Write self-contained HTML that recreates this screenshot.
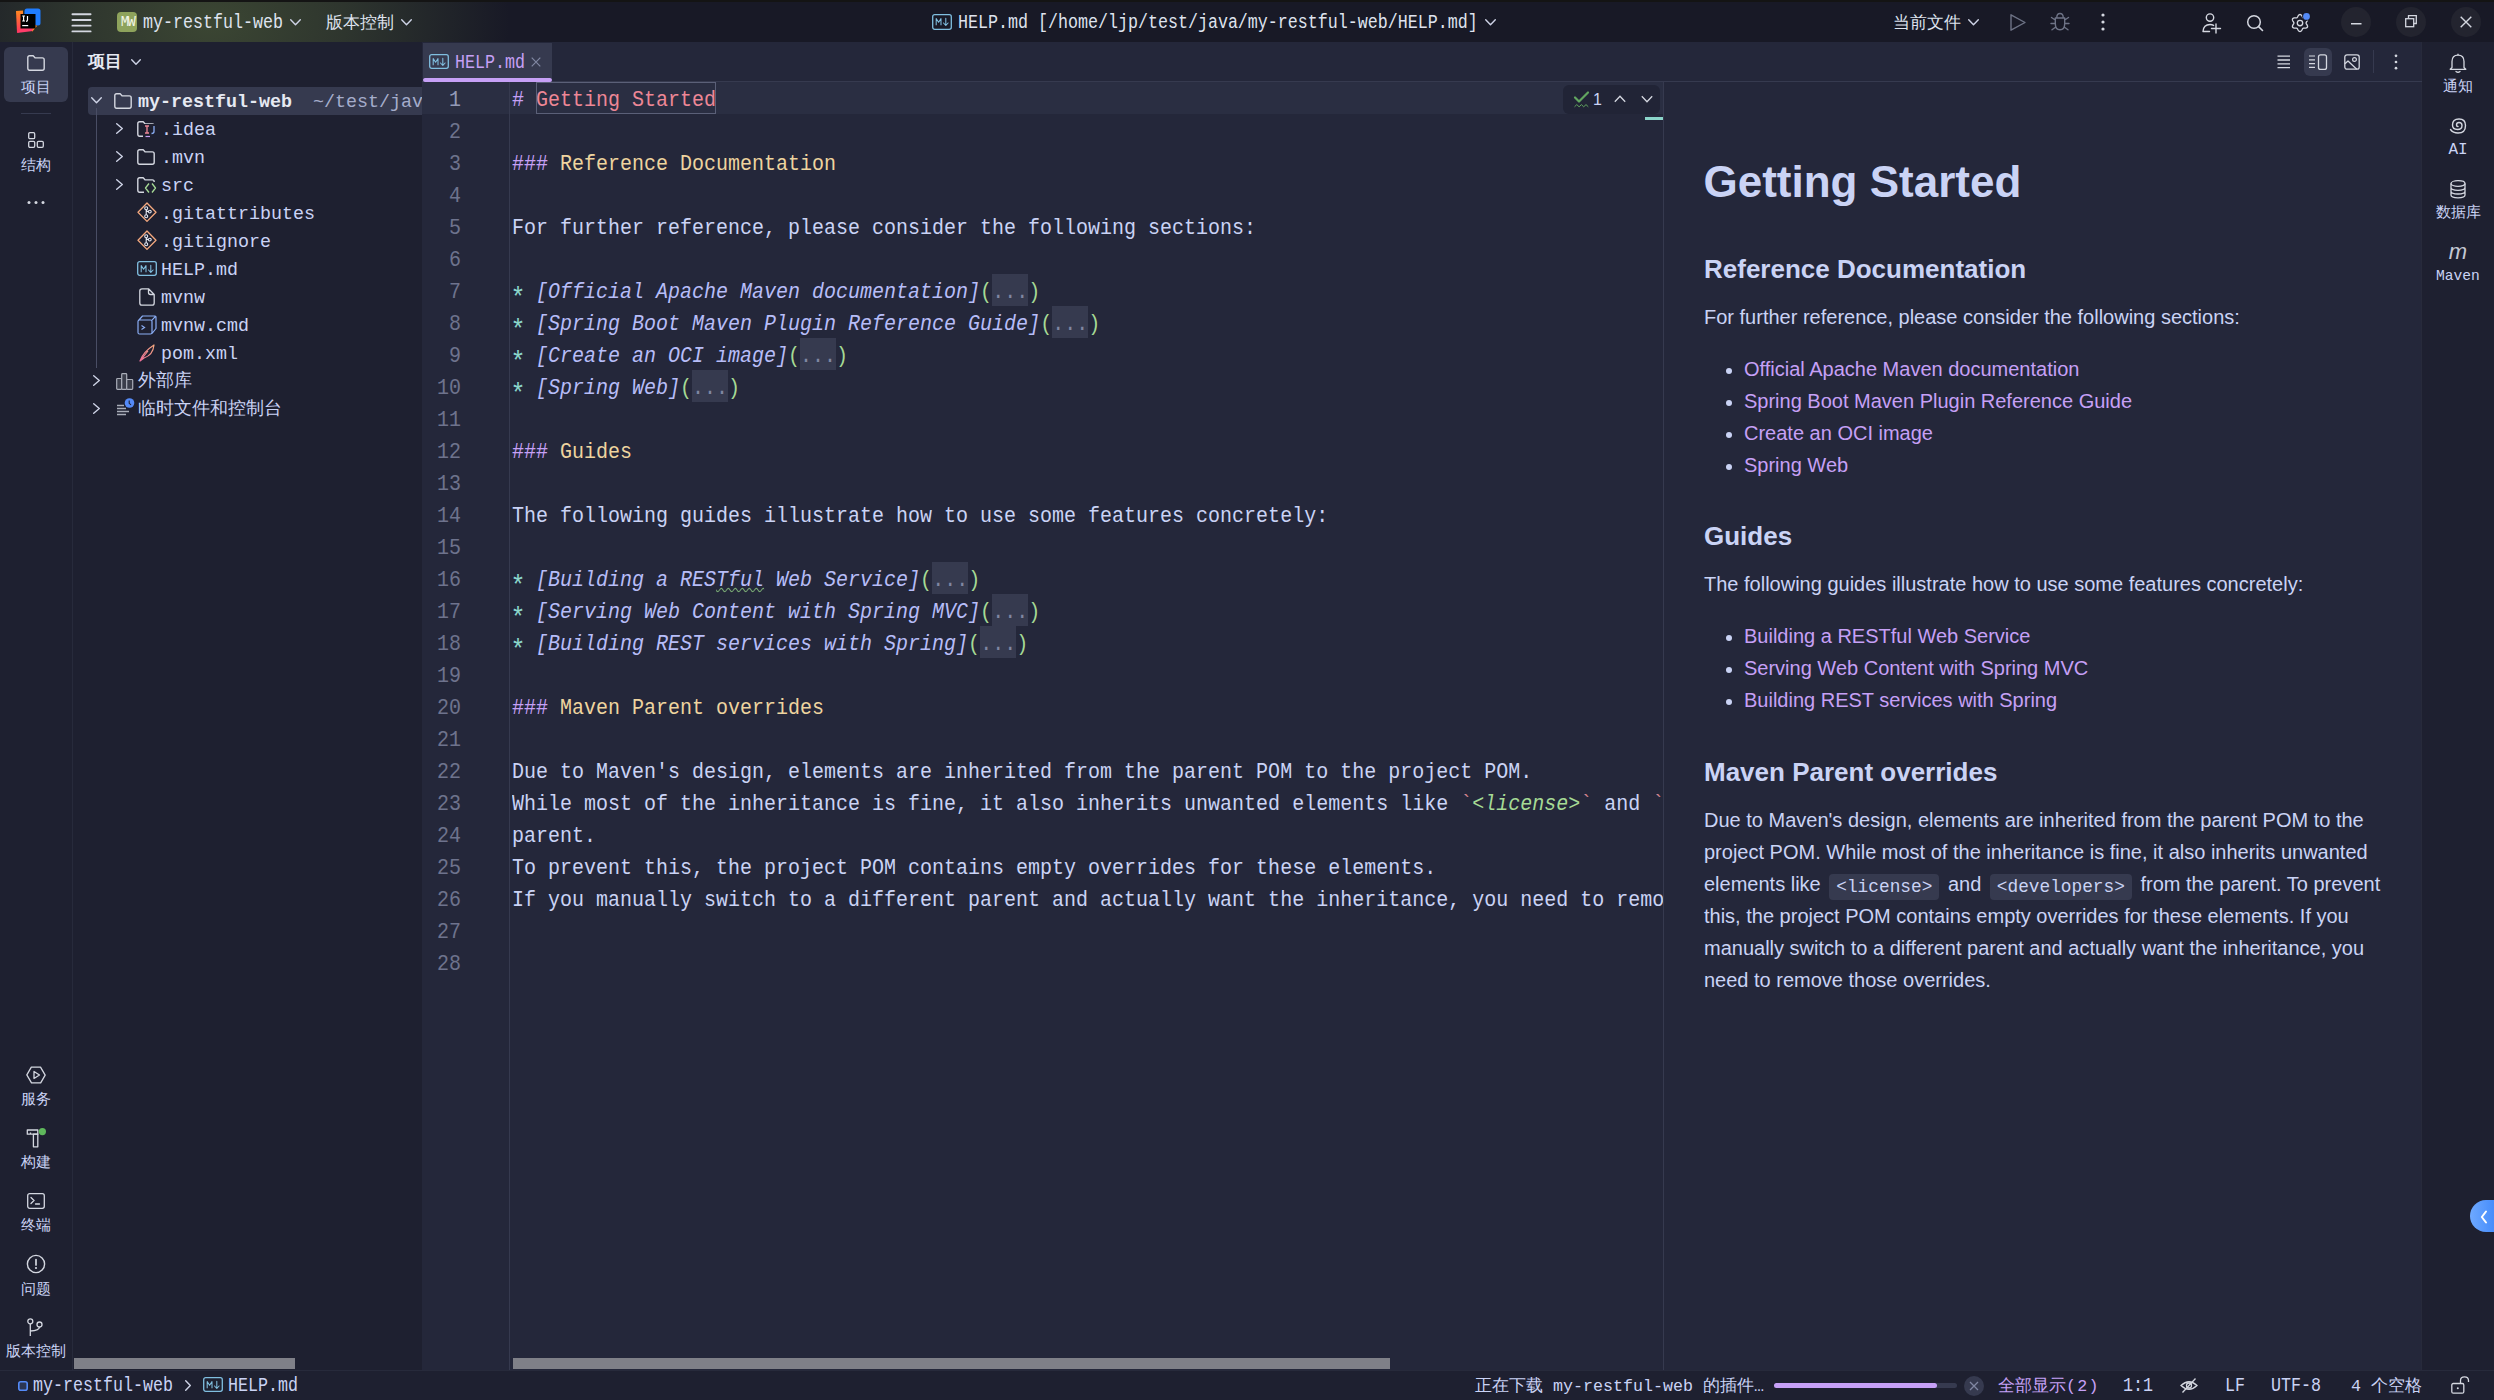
<!DOCTYPE html><html><head><meta charset="utf-8"><style>
*{box-sizing:border-box;margin:0;padding:0}
html,body{width:2494px;height:1400px;overflow:hidden;background:#1e2030;font-family:'Liberation Mono', monospace;color:#cad3f5}
.a{position:absolute;white-space:pre}
svg.a{overflow:visible}
.ed{font-family:'Liberation Mono', monospace;font-size:20px;line-height:32px;height:32px;transform:scaleY(1.14);transform-origin:0 8px}
.ln{font-family:'Liberation Mono', monospace;font-size:20px;line-height:32px;color:#6e738d;text-align:right;width:60px;left:401px;transform:scaleY(1.1);transform-origin:0 8px}
.tr{font-family:'Liberation Mono', monospace;font-size:18.33px;line-height:28px;height:28px;color:#cad3f5}
.pv{font-family:'Liberation Sans', sans-serif;font-size:20px;color:#cad3f5}
.lbl{font-family:'Liberation Mono', monospace;font-size:15px;line-height:18px;color:#cad3f5;text-align:center;width:72px;left:0}
</style></head><body>
<div class="a" style="left:0px;top:0px;width:2494px;height:42px;background:#181926;"></div>
<div class="a" style="left:0px;top:0px;width:2494px;height:2px;background:#141414;"></div>
<div class="a" style="left:0;top:2px;width:700px;height:40px;background:radial-gradient(ellipse 300px 190px at 210px 20px, rgba(112,138,70,0.40) 0%, rgba(112,138,70,0.25) 45%, rgba(112,138,70,0) 100%)"></div>
<div class="a" style="left:0px;top:42px;width:72px;height:1328px;background:#1e2030;"></div>
<div class="a" style="left:72px;top:42px;width:1px;height:1328px;background:#272a3b;"></div>
<div class="a" style="left:73px;top:42px;width:349px;height:1328px;background:#1e2030;"></div>
<div class="a" style="left:422px;top:42px;width:1242px;height:1328px;background:#24273a;"></div>
<div class="a" style="left:1664px;top:42px;width:758px;height:1328px;background:#24273a;"></div>
<div class="a" style="left:2422px;top:42px;width:72px;height:1328px;background:#1e2030;"></div>
<div class="a" style="left:2421px;top:42px;width:1px;height:1328px;background:#272a3b;"></div>
<div class="a" style="left:0px;top:1370px;width:2494px;height:30px;background:#1e2030;"></div>
<div class="a" style="left:0px;top:1370px;width:2494px;height:1px;background:#272a3b;"></div>
<svg class="a" style="left:15px;top:8px;" width="26" height="26" viewBox="0 0 26 26" fill="none">
<defs><linearGradient id="lg1" x1="0" y1="0" x2="0" y2="1"><stop offset="0" stop-color="#ff8a1f"/><stop offset="1" stop-color="#ff3160"/></linearGradient></defs>
<path d="M1 3 L8 2.5 L8 22 L2 25 Z" fill="url(#lg1)"/>
<path d="M2 25 L18 23 L18 19 L8 19 Z" fill="#ff3d6a"/>
<rect x="9.5" y="0.5" width="16" height="17" rx="2.5" fill="#1f7cff"/>
<path d="M17 24 L22 18 L19 16 Z" fill="#ff8a1f"/>
<rect x="5.5" y="6" width="15" height="14.5" fill="#000"/>
<path d="M7.2 8 H10 M8.6 8 V13 M7.2 13 H10 M12.5 8 V12 Q12.5 13.3 11 13.3" stroke="#fff" stroke-width="1.2"/>
<rect x="7.2" y="17" width="6" height="1.2" fill="#fff"/>
</svg>
<svg class="a" style="left:71px;top:13px;" width="21" height="19" viewBox="0 0 21 19" fill="none"><rect x="0.5" y="0.3" width="20" height="1.9" rx="0.9" fill="#d4d7e0"/><rect x="0.5" y="6.0" width="20" height="1.9" rx="0.9" fill="#d4d7e0"/><rect x="0.5" y="11.700000000000001" width="20" height="1.9" rx="0.9" fill="#d4d7e0"/><rect x="0.5" y="17.400000000000002" width="20" height="1.9" rx="0.9" fill="#d4d7e0"/></svg>
<div class="a" style="left:117px;top:12px;width:20px;height:20px;border-radius:4px;background:#8ea35c"></div>
<div class="a " style="left:117px;top:12px;width:21px;height:20px;line-height:20px;text-align:center;font-size:14px;letter-spacing:-1.6px;color:#f2f5e6;font-family:'Liberation Mono', monospace">MW</div>
<div class="a " style="left:143px;top:11px;font-size:16.67px;line-height:24px;color:#dfe3ee;transform:scaleY(1.17);transform-origin:0 10.3px">my-restful-web</div>
<svg class="a" style="left:290px;top:19px;" width="11" height="6.5" viewBox="0 0 11 6.5" fill="none"><path d="M0.7 0.7 L5.5 5.8 L10.3 0.7" stroke="#ced3e6" stroke-width="1.4" stroke-linecap="round" stroke-linejoin="round"/></svg>
<div class="a " style="left:326px;top:11px;font-size:17px;line-height:24px;color:#dfe3ee;font-family:'Liberation Sans', sans-serif">版本控制</div>
<svg class="a" style="left:401px;top:19px;" width="11" height="6.5" viewBox="0 0 11 6.5" fill="none"><path d="M0.7 0.7 L5.5 5.8 L10.3 0.7" stroke="#ced3e6" stroke-width="1.4" stroke-linecap="round" stroke-linejoin="round"/></svg>
<svg class="a" style="left:932px;top:14px;" width="20" height="16" viewBox="0 0 20 16" fill="none"><rect x="0.7" y="0.7" width="18.6" height="14.6" rx="2" stroke="#80bfe0" stroke-width="1.3"/><path d="M4.2 11.3 V4.6 L6.6 8.2 L9 4.6 V11.3" stroke="#80bfe0" stroke-width="1.05" stroke-linejoin="round"/><path d="M13.8 4.2 V11.3 M11.5 9 L13.8 11.5 L16.1 9" stroke="#80bfe0" stroke-width="1.05" stroke-linecap="round" stroke-linejoin="round"/></svg>
<div class="a " style="left:958px;top:11px;font-size:16.67px;line-height:24px;color:#dfe3ee;transform:scaleY(1.17);transform-origin:0 10.3px">HELP.md [/home/ljp/test/java/my-restful-web/HELP.md]</div>
<svg class="a" style="left:1485px;top:19px;" width="11" height="6.5" viewBox="0 0 11 6.5" fill="none"><path d="M0.7 0.7 L5.5 5.8 L10.3 0.7" stroke="#ced3e6" stroke-width="1.4" stroke-linecap="round" stroke-linejoin="round"/></svg>
<div class="a " style="left:1893px;top:11px;font-size:17px;line-height:24px;color:#dfe3ee;font-family:'Liberation Sans', sans-serif">当前文件</div>
<svg class="a" style="left:1968px;top:19px;" width="11" height="6.5" viewBox="0 0 11 6.5" fill="none"><path d="M0.7 0.7 L5.5 5.8 L10.3 0.7" stroke="#ced3e6" stroke-width="1.4" stroke-linecap="round" stroke-linejoin="round"/></svg>
<svg class="a" style="left:2009px;top:13px;" width="18" height="19" viewBox="0 0 18 19" fill="none"><path d="M2 1.8 L16 9.5 L2 17.2 Z" stroke="#6e7386" stroke-width="1.4" stroke-linejoin="round"/></svg>
<svg class="a" style="left:2049px;top:12px;" width="22" height="20" viewBox="0 0 22 20" fill="none"><path d="M7.8 5.5 Q7.8 1.5 11 1.5 Q14.2 1.5 14.2 5.5 M6.3 6 H15.7 V11.5 Q15.7 17.8 11 17.8 Q6.3 17.8 6.3 11.5 Z M6.3 8 L2.5 5.5 M15.7 8 L19.5 5.5 M6.3 11.5 H2 M15.7 11.5 H20 M6.8 15 L3 17.8 M15.2 15 L19 17.8" stroke="#6e7386" stroke-width="1.4" stroke-linecap="round" stroke-linejoin="round"/></svg>
<svg class="a" style="left:2100px;top:12px;" width="6" height="20" viewBox="0 0 6 20" fill="none"><circle cx="3" cy="3" r="1.6" fill="#d4d7e0"/><circle cx="3" cy="10" r="1.6" fill="#d4d7e0"/><circle cx="3" cy="17" r="1.6" fill="#d4d7e0"/></svg>
<svg class="a" style="left:2201px;top:13px;" width="22" height="21" viewBox="0 0 22 21" fill="none"><circle cx="9" cy="4.6" r="3.7" stroke="#d4d7e0" stroke-width="1.4"/><path d="M2 18.5 Q2.5 11.5 9 11.5 Q11.2 11.5 12.6 12.4 M2 18.5 H8.5 M15 11 V20 M10.5 15.5 H19.5" stroke="#d4d7e0" stroke-width="1.4" stroke-linecap="round"/></svg>
<svg class="a" style="left:2246px;top:14px;" width="18" height="18" viewBox="0 0 18 18" fill="none"><circle cx="8" cy="8" r="6.3" stroke="#d4d7e0" stroke-width="1.5"/><path d="M12.6 12.6 L16.5 16.5" stroke="#d4d7e0" stroke-width="1.6" stroke-linecap="round"/></svg>
<svg class="a" style="left:2290px;top:13px;" width="22" height="22" viewBox="0 0 22 22" fill="none"><path d="M16.10 10.00 L16.18 10.40 L16.40 10.84 L16.71 11.33 L17.05 11.89 L17.35 12.49 L17.53 13.12 L17.54 13.72 L17.36 14.25 L16.99 14.67 L16.46 14.96 L15.83 15.12 L15.16 15.16 L14.51 15.14 L13.93 15.12 L13.44 15.15 L13.05 15.28 L12.74 15.55 L12.47 15.96 L12.20 16.48 L11.89 17.05 L11.51 17.61 L11.06 18.08 L10.55 18.39 L10.00 18.50 L9.45 18.39 L8.94 18.08 L8.49 17.61 L8.11 17.05 L7.80 16.48 L7.53 15.96 L7.26 15.55 L6.95 15.28 L6.56 15.15 L6.07 15.12 L5.49 15.14 L4.84 15.16 L4.17 15.12 L3.54 14.96 L3.01 14.67 L2.64 14.25 L2.46 13.72 L2.47 13.12 L2.65 12.49 L2.95 11.89 L3.29 11.33 L3.60 10.84 L3.82 10.40 L3.90 10.00 L3.82 9.60 L3.60 9.16 L3.29 8.67 L2.95 8.11 L2.65 7.51 L2.47 6.88 L2.46 6.28 L2.64 5.75 L3.01 5.33 L3.54 5.04 L4.17 4.88 L4.84 4.84 L5.49 4.86 L6.07 4.88 L6.56 4.85 L6.95 4.72 L7.26 4.45 L7.53 4.04 L7.80 3.52 L8.11 2.95 L8.49 2.39 L8.94 1.92 L9.45 1.61 L10.00 1.50 L10.55 1.61 L11.06 1.92 L11.51 2.39 L11.89 2.95 L12.20 3.52 L12.47 4.04 L12.74 4.45 L13.05 4.72 L13.44 4.85 L13.93 4.88 L14.51 4.86 L15.16 4.84 L15.83 4.88 L16.46 5.04 L16.99 5.33 L17.36 5.75 L17.54 6.28 L17.53 6.88 L17.35 7.51 L17.05 8.11 L16.71 8.67 L16.40 9.16 L16.18 9.60 Z" stroke="#d4d7e0" stroke-width="1.35" stroke-linejoin="round"/><circle cx="10" cy="10" r="2.7" stroke="#d4d7e0" stroke-width="1.35"/><circle cx="16.5" cy="3.4" r="4.3" fill="#181926"/><circle cx="16.5" cy="3.4" r="3.4" fill="#548af7"/></svg>
<div class="a" style="left:2341px;top:7px;width:30px;height:30px;border-radius:15px;background:#23242f"></div>
<div class="a" style="left:2396px;top:7px;width:30px;height:30px;border-radius:15px;background:#23242f"></div>
<div class="a" style="left:2451px;top:7px;width:30px;height:30px;border-radius:15px;background:#23242f"></div>
<svg class="a" style="left:2351px;top:23px;" width="11" height="2" viewBox="0 0 11 2" fill="none"><rect x="0" y="0" width="10.5" height="1.5" fill="#d4d7e0"/></svg>
<svg class="a" style="left:2405px;top:15px;" width="12" height="13" viewBox="0 0 12 13" fill="none"><rect x="0.7" y="3.7" width="8" height="8" stroke="#d4d7e0" stroke-width="1.3"/><path d="M3.5 3.5 V0.7 H11.3 V8.5 H8.8" stroke="#d4d7e0" stroke-width="1.3"/></svg>
<svg class="a" style="left:2460px;top:16px;" width="12" height="12" viewBox="0 0 12 12" fill="none"><path d="M0.7 0.7 L11.3 11.3 M11.3 0.7 L0.7 11.3" stroke="#d4d7e0" stroke-width="1.4"/></svg>
<div class="a" style="left:4px;top:47px;width:64px;height:55px;border-radius:6px;background:#363a4f"></div>
<svg class="a" style="left:27px;top:55px;" width="18" height="16" viewBox="0 0 18 16" fill="none"><path d="M0.8 2.6 Q0.8 0.8 2.6 0.8 H6.2 L8.2 2.9 H15.3 Q17.2 2.9 17.2 4.8 V13.3 Q17.2 15.2 15.3 15.2 H2.6 Q0.8 15.2 0.8 13.3 Z" stroke="#d4d7e0" stroke-width="1.4" stroke-linejoin="round"/></svg>
<div class="a lbl" style="top:78px;font-family:'Liberation Sans', sans-serif;font-size:15px;line-height:18px">项目</div>
<div class="a" style="left:21px;top:113px;width:30px;height:1px;background:#363a4f;"></div>
<svg class="a" style="left:28px;top:132px;" width="17" height="16" viewBox="0 0 17 16" fill="none"><rect x="0.7" y="0.7" width="6" height="6" rx="1.2" stroke="#d4d7e0" stroke-width="1.3"/><rect x="0.7" y="9.3" width="6" height="6" rx="1.2" stroke="#d4d7e0" stroke-width="1.3"/><rect x="9.3" y="9.3" width="6" height="6" rx="1.2" stroke="#d4d7e0" stroke-width="1.3"/></svg>
<div class="a lbl" style="top:156px;font-family:'Liberation Sans', sans-serif;font-size:15px;line-height:18px">结构</div>
<svg class="a" style="left:27px;top:200px;" width="18" height="5" viewBox="0 0 18 5" fill="none"><circle cx="2" cy="2.5" r="1.5" fill="#d4d7e0"/><circle cx="9" cy="2.5" r="1.5" fill="#d4d7e0"/><circle cx="16" cy="2.5" r="1.5" fill="#d4d7e0"/></svg>
<svg class="a" style="left:26px;top:1065px;" width="20" height="20" viewBox="0 0 20 20" fill="none"><path d="M10 1 L18 5.5 V14.5 L10 19 L2 14.5 V5.5 Z" stroke="#d4d7e0" stroke-width="1.3" stroke-linejoin="round" transform="rotate(30 10 10)"/><path d="M8 6.5 L13.5 10 L8 13.5 Z" stroke="#d4d7e0" stroke-width="1.3" stroke-linejoin="round"/></svg>
<div class="a lbl" style="top:1090px;font-family:'Liberation Sans', sans-serif;font-size:15px;line-height:18px">服务</div>
<svg class="a" style="left:26px;top:1127px;" width="22" height="22" viewBox="0 0 22 22" fill="none"><path d="M1.3 3 H11.8 V7.2 H1.3 Z M4.5 7.2 V5.6" stroke="#d4d7e0" stroke-width="1.3" stroke-linejoin="round"/><path d="M7.4 7.2 H11.8 V19.8 H7.4 Z" stroke="#d4d7e0" stroke-width="1.3" stroke-linejoin="round"/><circle cx="16.4" cy="4.6" r="3.6" fill="#5fb85c"/></svg>
<div class="a lbl" style="top:1153px;font-family:'Liberation Sans', sans-serif;font-size:15px;line-height:18px">构建</div>
<svg class="a" style="left:27px;top:1193px;" width="18" height="16" viewBox="0 0 18 16" fill="none"><rect x="0.7" y="0.7" width="16.6" height="14.6" rx="2" stroke="#d4d7e0" stroke-width="1.3"/><path d="M4 4.5 L7 7.5 L4 10.5 M8.5 11 H12.5" stroke="#d4d7e0" stroke-width="1.3" stroke-linecap="round"/></svg>
<div class="a lbl" style="top:1216px;font-family:'Liberation Sans', sans-serif;font-size:15px;line-height:18px">终端</div>
<svg class="a" style="left:26px;top:1254px;" width="20" height="20" viewBox="0 0 20 20" fill="none"><circle cx="10" cy="10" r="8.6" stroke="#d4d7e0" stroke-width="1.4"/><path d="M10 5.5 V11" stroke="#d4d7e0" stroke-width="1.7" stroke-linecap="round"/><circle cx="10" cy="14" r="1.1" fill="#d4d7e0"/></svg>
<div class="a lbl" style="top:1280px;font-family:'Liberation Sans', sans-serif;font-size:15px;line-height:18px">问题</div>
<svg class="a" style="left:27px;top:1318px;" width="16" height="19" viewBox="0 0 16 19" fill="none"><circle cx="3.3" cy="3.3" r="2.5" stroke="#d4d7e0" stroke-width="1.3"/><circle cx="12.5" cy="6.5" r="2.5" stroke="#d4d7e0" stroke-width="1.3"/><path d="M3.3 5.8 V18 M12.5 9 Q12.5 12.5 3.3 13" stroke="#d4d7e0" stroke-width="1.3"/></svg>
<div class="a lbl" style="top:1342px;font-family:'Liberation Sans', sans-serif;font-size:15px;line-height:18px">版本控制</div>
<div class="a " style="left:88px;top:50px;font-size:17px;line-height:24px;color:#e6e9f2;font-weight:bold;font-family:'Liberation Sans', sans-serif">项目</div>
<svg class="a" style="left:131px;top:59px;" width="10" height="6" viewBox="0 0 10 6" fill="none"><path d="M0.7 0.7 L5.0 5.3 L9.3 0.7" stroke="#ced3e6" stroke-width="1.4" stroke-linecap="round" stroke-linejoin="round"/></svg>
<div class="a" style="left:88px;top:87px;width:334px;height:28px;border-radius:4px 0 0 4px;background:#363a4f"></div>
<div class="a" style="left:96px;top:108px;width:1px;height:260px;background:#494d64;"></div>
<svg class="a" style="left:91px;top:97px;" width="11" height="6.5" viewBox="0 0 11 6.5" fill="none"><path d="M0.7 0.7 L5.5 5.8 L10.3 0.7" stroke="#ced3e6" stroke-width="1.4" stroke-linecap="round" stroke-linejoin="round"/></svg>
<svg class="a" style="left:114px;top:93px;" width="18" height="16" viewBox="0 0 18 16" fill="none"><path d="M0.8 2.6 Q0.8 0.8 2.6 0.8 H6.2 L8.2 2.9 H15.3 Q17.2 2.9 17.2 4.8 V13.3 Q17.2 15.2 15.3 15.2 H2.6 Q0.8 15.2 0.8 13.3 Z" stroke="#d4d7e0" stroke-width="1.4" stroke-linejoin="round"/></svg>
<div class="a tr" style="left:138px;top:89px;font-weight:bold;color:#e6e9f2">my-restful-web</div>
<div class="a tr" style="left:313px;top:89px;width:109px;overflow:hidden;color:#a5adcb">~/test/java/my-restful-web</div>
<svg class="a" style="left:116px;top:123px;" width="7" height="11" viewBox="0 0 7 11" fill="none"><path d="M0.7 0.7 L6.3 5.5 L0.7 10.3" stroke="#ced3e6" stroke-width="1.4" stroke-linecap="round" stroke-linejoin="round"/></svg>
<svg class="a" style="left:137px;top:121px;" width="18" height="16" viewBox="0 0 18 16" fill="none"><path d="M0.8 2.6 Q0.8 0.8 2.6 0.8 H6.2 L8.2 2.9 H15.3 Q17.2 2.9 17.2 4.8 V13.3 Q17.2 15.2 15.3 15.2 H2.6 Q0.8 15.2 0.8 13.3 Z" stroke="#d4d7e0" stroke-width="1.4" stroke-linejoin="round"/></svg>
<div class="a" style="left:143px;top:124px;width:13px;height:14px;background:#1e2030"></div>
<svg class="a" style="left:144px;top:125px;" width="13" height="14" viewBox="0 0 13 14" fill="none"><path d="M1 1 H5 M3 1 V8 M1 8 H5" stroke="#ed8796" stroke-width="1.3"/><path d="M10 1 V6.5 Q10 8.5 7.5 8.5" stroke="#8aadf4" stroke-width="1.3"/><path d="M1.5 11.5 H6" stroke="#c6a0f6" stroke-width="1.2"/></svg>
<div class="a tr" style="left:161px;top:117px;">.idea</div>
<svg class="a" style="left:116px;top:151px;" width="7" height="11" viewBox="0 0 7 11" fill="none"><path d="M0.7 0.7 L6.3 5.5 L0.7 10.3" stroke="#ced3e6" stroke-width="1.4" stroke-linecap="round" stroke-linejoin="round"/></svg>
<svg class="a" style="left:137px;top:149px;" width="18" height="16" viewBox="0 0 18 16" fill="none"><path d="M0.8 2.6 Q0.8 0.8 2.6 0.8 H6.2 L8.2 2.9 H15.3 Q17.2 2.9 17.2 4.8 V13.3 Q17.2 15.2 15.3 15.2 H2.6 Q0.8 15.2 0.8 13.3 Z" stroke="#d4d7e0" stroke-width="1.4" stroke-linejoin="round"/></svg>
<div class="a tr" style="left:161px;top:145px;">.mvn</div>
<svg class="a" style="left:116px;top:179px;" width="7" height="11" viewBox="0 0 7 11" fill="none"><path d="M0.7 0.7 L6.3 5.5 L0.7 10.3" stroke="#ced3e6" stroke-width="1.4" stroke-linecap="round" stroke-linejoin="round"/></svg>
<svg class="a" style="left:137px;top:177px;" width="18" height="16" viewBox="0 0 18 16" fill="none"><path d="M0.8 2.6 Q0.8 0.8 2.6 0.8 H6.2 L8.2 2.9 H15.3 Q17.2 2.9 17.2 4.8 V13.3 Q17.2 15.2 15.3 15.2 H2.6 Q0.8 15.2 0.8 13.3 Z" stroke="#d4d7e0" stroke-width="1.4" stroke-linejoin="round"/></svg>
<div class="a" style="left:144px;top:182px;width:13px;height:12px;background:#1e2030"></div>
<svg class="a" style="left:144px;top:182px;" width="13" height="12" viewBox="0 0 13 12" fill="none"><path d="M5 1.5 L1.5 6 L5 10.5 M8 1.5 L11.5 6 L8 10.5" stroke="#a6da95" stroke-width="1.3" stroke-linejoin="round"/></svg>
<div class="a tr" style="left:161px;top:173px;">src</div>
<svg class="a" style="left:137px;top:202px;" width="20" height="21" viewBox="0 0 20 21" fill="none"><path d="M10 1 L19 10.2 L10 19.4 L1 10.2 Z" stroke="#f5a97f" stroke-width="1.3" stroke-linejoin="round"/><circle cx="9.2" cy="6.3" r="1.5" stroke="#e6e9f2" stroke-width="1.1"/><circle cx="9.2" cy="14.2" r="1.5" stroke="#e6e9f2" stroke-width="1.1"/><circle cx="12.8" cy="9.6" r="1.4" stroke="#e6e9f2" stroke-width="1.1"/><path d="M9.2 7.8 V12.7 M9.2 7.8 Q9.5 9.6 11.4 9.6" stroke="#e6e9f2" stroke-width="1.1"/></svg>
<div class="a tr" style="left:161px;top:201px;">.gitattributes</div>
<svg class="a" style="left:137px;top:230px;" width="20" height="21" viewBox="0 0 20 21" fill="none"><path d="M10 1 L19 10.2 L10 19.4 L1 10.2 Z" stroke="#f5a97f" stroke-width="1.3" stroke-linejoin="round"/><circle cx="9.2" cy="6.3" r="1.5" stroke="#e6e9f2" stroke-width="1.1"/><circle cx="9.2" cy="14.2" r="1.5" stroke="#e6e9f2" stroke-width="1.1"/><circle cx="12.8" cy="9.6" r="1.4" stroke="#e6e9f2" stroke-width="1.1"/><path d="M9.2 7.8 V12.7 M9.2 7.8 Q9.5 9.6 11.4 9.6" stroke="#e6e9f2" stroke-width="1.1"/></svg>
<div class="a tr" style="left:161px;top:229px;">.gitignore</div>
<svg class="a" style="left:137px;top:261px;" width="20" height="15" viewBox="0 0 20 15" fill="none"><rect x="0.7" y="0.7" width="18.6" height="13.6" rx="2" stroke="#80bfe0" stroke-width="1.3"/><path d="M4.2 11.3 V4.6 L6.6 8.2 L9 4.6 V11.3" stroke="#80bfe0" stroke-width="1.05" stroke-linejoin="round"/><path d="M13.8 4.2 V11.3 M11.5 9 L13.8 11.5 L16.1 9" stroke="#80bfe0" stroke-width="1.05" stroke-linecap="round" stroke-linejoin="round"/></svg>
<div class="a tr" style="left:161px;top:257px;">HELP.md</div>
<svg class="a" style="left:139px;top:288px;" width="16" height="18" viewBox="0 0 16 18" fill="none"><path d="M3 0.8 H9.5 L15.2 6.5 V15 Q15.2 17.2 13 17.2 H3 Q0.8 17.2 0.8 15 V3 Q0.8 0.8 3 0.8 Z M9.5 0.8 V4.5 Q9.5 6.5 11.5 6.5 H15.2" stroke="#d4d7e0" stroke-width="1.3" stroke-linejoin="round"/></svg>
<div class="a tr" style="left:161px;top:285px;">mvnw</div>
<svg class="a" style="left:137px;top:315px;" width="20" height="20" viewBox="0 0 20 20" fill="none"><path d="M1 6.5 Q1 5 2.5 5 H13.5 Q15 5 15 6.5 V17.5 Q15 19 13.5 19 H2.5 Q1 19 1 17.5 Z M1.5 5.5 L5.5 1 H18 Q19 1 19 2 V13.5 L15 18.5 M15 5.2 L18.5 1.3" stroke="#8aadf4" stroke-width="1.2" stroke-linejoin="round"/><path d="M4.5 10.5 L7.5 12.5 L4.5 14.5" stroke="#8aadf4" stroke-width="1.2"/></svg>
<div class="a tr" style="left:161px;top:313px;">mvnw.cmd</div>
<svg class="a" style="left:139px;top:344px;" width="16" height="18" viewBox="0 0 16 18" fill="none"><defs><linearGradient id="pg" x1="1" y1="0" x2="0" y2="1"><stop offset="0" stop-color="#f5a97f"/><stop offset="1" stop-color="#ee6f9a"/></linearGradient></defs><path d="M1 17 Q4 8 15 1 Q14 11 5 14 Z M1 17 L9 7" stroke="url(#pg)" stroke-width="1.2" stroke-linejoin="round"/></svg>
<div class="a tr" style="left:161px;top:341px;">pom.xml</div>
<svg class="a" style="left:93px;top:375px;" width="7" height="11" viewBox="0 0 7 11" fill="none"><path d="M0.7 0.7 L6.3 5.5 L0.7 10.3" stroke="#ced3e6" stroke-width="1.4" stroke-linecap="round" stroke-linejoin="round"/></svg>
<svg class="a" style="left:116px;top:373px;" width="18" height="17" viewBox="0 0 18 17" fill="none"><rect x="0.7" y="5.5" width="5" height="10.8" rx="0.8" fill="#3a3d4a" stroke="#a9adb8" stroke-width="1.2"/><rect x="5.7" y="0.7" width="5" height="15.6" rx="0.8" fill="#3a3d4a" stroke="#a9adb8" stroke-width="1.2"/><rect x="10.7" y="6.5" width="6" height="9.8" rx="0.8" fill="#3a3d4a" stroke="#a9adb8" stroke-width="1.2"/></svg>
<div class="a " style="left:138px;top:366px;font-size:18px;line-height:28px;color:#cad3f5;font-family:'Liberation Sans', sans-serif">外部库</div>
<svg class="a" style="left:93px;top:403px;" width="7" height="11" viewBox="0 0 7 11" fill="none"><path d="M0.7 0.7 L6.3 5.5 L0.7 10.3" stroke="#ced3e6" stroke-width="1.4" stroke-linecap="round" stroke-linejoin="round"/></svg>
<svg class="a" style="left:116px;top:398px;" width="19" height="18" viewBox="0 0 19 18" fill="none"><path d="M1 7.5 H8 M1 10.5 H10 M1 13.5 H13 M1 16.5 H10" stroke="#a9adb8" stroke-width="1.3"/><circle cx="13.5" cy="5" r="4.8" fill="#548af7"/><path d="M13.2 2.5 V5.3 L15 6.8" stroke="#1e2030" stroke-width="1.1"/></svg>
<div class="a " style="left:138px;top:394px;font-size:18px;line-height:28px;color:#cad3f5;font-family:'Liberation Sans', sans-serif">临时文件和控制台</div>
<div class="a" style="left:74px;top:1358px;width:221px;height:11px;background:#7f8088;"></div>
<div class="a" style="left:422px;top:81px;width:2000px;height:1px;background:#363a4f;"></div>
<div class="a" style="left:423px;top:43px;width:129px;height:35px;background:#363a4f;"></div>
<div class="a" style="left:423px;top:78px;width:129px;height:4px;border-radius:2px;background:#c6a0f6"></div>
<svg class="a" style="left:429px;top:54px;" width="20" height="15" viewBox="0 0 20 15" fill="none"><rect x="0.7" y="0.7" width="18.6" height="13.6" rx="2" stroke="#80bfe0" stroke-width="1.3"/><path d="M4.2 11.3 V4.6 L6.6 8.2 L9 4.6 V11.3" stroke="#80bfe0" stroke-width="1.05" stroke-linejoin="round"/><path d="M13.8 4.2 V11.3 M11.5 9 L13.8 11.5 L16.1 9" stroke="#80bfe0" stroke-width="1.05" stroke-linecap="round" stroke-linejoin="round"/></svg>
<div class="a " style="left:455px;top:51px;font-size:16.67px;line-height:24px;color:#c6a0f6;transform:scaleY(1.18);transform-origin:0 11px">HELP.md</div>
<svg class="a" style="left:531px;top:57px;" width="10" height="10" viewBox="0 0 10 10" fill="none"><path d="M0.7 0.7 L9.3 9.3 M9.3 0.7 L0.7 9.3" stroke="#8087a2" stroke-width="1.2"/></svg>
<svg class="a" style="left:2277px;top:55px;" width="14" height="14" viewBox="0 0 14 14" fill="none"><path d="M0.5 1.2 H13 M0.5 5 H13 M0.5 8.8 H13 M0.5 12.6 H13" stroke="#d4d7e0" stroke-width="1.3"/></svg>
<div class="a" style="left:2304px;top:48px;width:28px;height:28px;border-radius:6px;background:#363a4f"></div>
<svg class="a" style="left:2308px;top:54px;" width="20" height="16" viewBox="0 0 20 16" fill="none"><path d="M1 2 H7 M1 5.8 H7 M1 9.6 H7 M1 13.4 H7" stroke="#d4d7e0" stroke-width="1.2"/><rect x="10.5" y="0.8" width="8" height="14.6" rx="2" stroke="#d4d7e0" stroke-width="1.3"/></svg>
<svg class="a" style="left:2344px;top:54px;" width="16" height="16" viewBox="0 0 16 16" fill="none"><rect x="0.8" y="0.8" width="14.4" height="14.4" rx="2.2" stroke="#d4d7e0" stroke-width="1.3"/><path d="M0.9 9.8 L4 7 L12.8 15.2" stroke="#d4d7e0" stroke-width="1.3" stroke-linejoin="round"/><circle cx="10.5" cy="5.5" r="1.9" stroke="#d4d7e0" stroke-width="1.2"/></svg>
<div class="a" style="left:2373px;top:50px;width:1px;height:23px;background:#363a4f;"></div>
<svg class="a" style="left:2393px;top:53px;" width="6" height="19" viewBox="0 0 6 19" fill="none"><circle cx="3" cy="2.8" r="1.35" fill="#d4d7e0"/><circle cx="3" cy="9" r="1.35" fill="#d4d7e0"/><circle cx="3" cy="15.2" r="1.35" fill="#d4d7e0"/></svg>
<div class="a" style="left:422px;top:82px;width:1242px;height:32px;background:#2a2e42;"></div>
<div class="a" style="left:509px;top:82px;width:1px;height:1288px;background:#363a4f;"></div>
<div class="a" style="left:1663px;top:82px;width:1px;height:1288px;background:#363a4f;"></div>
<div class="a ln" style="top:84px;color:#939ab7">1</div>
<div class="a ed" style="left:512px;top:83px;width:1151px;overflow:hidden"><span style="color:#c6a0f6;"># </span><span style="color:#ed8796;">Getting Started</span></div>
<div class="a ln" style="top:116px;color:#6e738d">2</div>
<div class="a ln" style="top:148px;color:#6e738d">3</div>
<div class="a ed" style="left:512px;top:147px;width:1151px;overflow:hidden"><span style="color:#c6a0f6;">### </span><span style="color:#eed49f;">Reference Documentation</span></div>
<div class="a ln" style="top:180px;color:#6e738d">4</div>
<div class="a ln" style="top:212px;color:#6e738d">5</div>
<div class="a ed" style="left:512px;top:211px;width:1151px;overflow:hidden"><span style="color:#cad3f5;">For further reference, please consider the following sections:</span></div>
<div class="a ln" style="top:244px;color:#6e738d">6</div>
<div class="a ln" style="top:276px;color:#6e738d">7</div>
<div class="a" style="left:992px;top:274px;width:36px;height:31.5px;background:#363a4f;"></div>
<div class="a ed" style="left:512px;top:275px;width:1151px;overflow:hidden"><span style="color:#8bd5ca;display:inline-block;transform:translateY(4px) scale(1.25);transform-origin:50% 30%">*</span> <span style="color:#b7bdf8;font-style:italic">[Official Apache Maven documentation]</span><span style="color:#a6da95;">(</span><span style="color:#8087a2">...</span><span style="color:#a6da95;">)</span></div>
<div class="a ln" style="top:308px;color:#6e738d">8</div>
<div class="a" style="left:1052px;top:306px;width:36px;height:31.5px;background:#363a4f;"></div>
<div class="a ed" style="left:512px;top:307px;width:1151px;overflow:hidden"><span style="color:#8bd5ca;display:inline-block;transform:translateY(4px) scale(1.25);transform-origin:50% 30%">*</span> <span style="color:#b7bdf8;font-style:italic">[Spring Boot Maven Plugin Reference Guide]</span><span style="color:#a6da95;">(</span><span style="color:#8087a2">...</span><span style="color:#a6da95;">)</span></div>
<div class="a ln" style="top:340px;color:#6e738d">9</div>
<div class="a" style="left:800px;top:338px;width:36px;height:31.5px;background:#363a4f;"></div>
<div class="a ed" style="left:512px;top:339px;width:1151px;overflow:hidden"><span style="color:#8bd5ca;display:inline-block;transform:translateY(4px) scale(1.25);transform-origin:50% 30%">*</span> <span style="color:#b7bdf8;font-style:italic">[Create an OCI image]</span><span style="color:#a6da95;">(</span><span style="color:#8087a2">...</span><span style="color:#a6da95;">)</span></div>
<div class="a ln" style="top:372px;color:#6e738d">10</div>
<div class="a" style="left:692px;top:370px;width:36px;height:31.5px;background:#363a4f;"></div>
<div class="a ed" style="left:512px;top:371px;width:1151px;overflow:hidden"><span style="color:#8bd5ca;display:inline-block;transform:translateY(4px) scale(1.25);transform-origin:50% 30%">*</span> <span style="color:#b7bdf8;font-style:italic">[Spring Web]</span><span style="color:#a6da95;">(</span><span style="color:#8087a2">...</span><span style="color:#a6da95;">)</span></div>
<div class="a ln" style="top:404px;color:#6e738d">11</div>
<div class="a ln" style="top:436px;color:#6e738d">12</div>
<div class="a ed" style="left:512px;top:435px;width:1151px;overflow:hidden"><span style="color:#c6a0f6;">### </span><span style="color:#eed49f;">Guides</span></div>
<div class="a ln" style="top:468px;color:#6e738d">13</div>
<div class="a ln" style="top:500px;color:#6e738d">14</div>
<div class="a ed" style="left:512px;top:499px;width:1151px;overflow:hidden"><span style="color:#cad3f5;">The following guides illustrate how to use some features concretely:</span></div>
<div class="a ln" style="top:532px;color:#6e738d">15</div>
<div class="a ln" style="top:564px;color:#6e738d">16</div>
<div class="a" style="left:932px;top:562px;width:36px;height:31.5px;background:#363a4f;"></div>
<div class="a ed" style="left:512px;top:563px;width:1151px;overflow:hidden"><span style="color:#8bd5ca;display:inline-block;transform:translateY(4px) scale(1.25);transform-origin:50% 30%">*</span> <span style="color:#b7bdf8;font-style:italic">[Building a RES</span><span style="color:#b7bdf8;font-style:italic;text-decoration:underline wavy #78a873;text-decoration-thickness:1px;text-underline-offset:1px">Tful</span><span style="color:#b7bdf8;font-style:italic"> Web Service]</span><span style="color:#a6da95;">(</span><span style="color:#8087a2">...</span><span style="color:#a6da95;">)</span></div>
<div class="a ln" style="top:596px;color:#6e738d">17</div>
<div class="a" style="left:992px;top:594px;width:36px;height:31.5px;background:#363a4f;"></div>
<div class="a ed" style="left:512px;top:595px;width:1151px;overflow:hidden"><span style="color:#8bd5ca;display:inline-block;transform:translateY(4px) scale(1.25);transform-origin:50% 30%">*</span> <span style="color:#b7bdf8;font-style:italic">[Serving Web Content with Spring MVC]</span><span style="color:#a6da95;">(</span><span style="color:#8087a2">...</span><span style="color:#a6da95;">)</span></div>
<div class="a ln" style="top:628px;color:#6e738d">18</div>
<div class="a" style="left:980px;top:626px;width:36px;height:31.5px;background:#363a4f;"></div>
<div class="a ed" style="left:512px;top:627px;width:1151px;overflow:hidden"><span style="color:#8bd5ca;display:inline-block;transform:translateY(4px) scale(1.25);transform-origin:50% 30%">*</span> <span style="color:#b7bdf8;font-style:italic">[Building REST services with Spring]</span><span style="color:#a6da95;">(</span><span style="color:#8087a2">...</span><span style="color:#a6da95;">)</span></div>
<div class="a ln" style="top:660px;color:#6e738d">19</div>
<div class="a ln" style="top:692px;color:#6e738d">20</div>
<div class="a ed" style="left:512px;top:691px;width:1151px;overflow:hidden"><span style="color:#c6a0f6;">### </span><span style="color:#eed49f;">Maven Parent overrides</span></div>
<div class="a ln" style="top:724px;color:#6e738d">21</div>
<div class="a ln" style="top:756px;color:#6e738d">22</div>
<div class="a ed" style="left:512px;top:755px;width:1151px;overflow:hidden"><span style="color:#cad3f5;">Due to Maven&#x27;s design, elements are inherited from the parent POM to the project POM.</span></div>
<div class="a ln" style="top:788px;color:#6e738d">23</div>
<div class="a ed" style="left:512px;top:787px;width:1151px;overflow:hidden"><span style="color:#cad3f5;">While most of the inheritance is fine, it also inherits unwanted elements like </span><span style="color:#d0848f;">`</span><span style="color:#a6da95;font-style:italic">&lt;license&gt;</span><span style="color:#d0848f;">`</span><span style="color:#cad3f5;"> and </span><span style="color:#d0848f;">`</span></div>
<div class="a ln" style="top:820px;color:#6e738d">24</div>
<div class="a ed" style="left:512px;top:819px;width:1151px;overflow:hidden"><span style="color:#cad3f5;">parent.</span></div>
<div class="a ln" style="top:852px;color:#6e738d">25</div>
<div class="a ed" style="left:512px;top:851px;width:1151px;overflow:hidden"><span style="color:#cad3f5;">To prevent this, the project POM contains empty overrides for these elements.</span></div>
<div class="a ln" style="top:884px;color:#6e738d">26</div>
<div class="a ed" style="left:512px;top:883px;width:1151px;overflow:hidden"><span style="color:#cad3f5;">If you manually switch to a different parent and actually want the inheritance, you need to remo</span></div>
<div class="a ln" style="top:916px;color:#6e738d">27</div>
<div class="a ln" style="top:948px;color:#6e738d">28</div>
<div class="a" style="left:536px;top:82px;width:180px;height:32px;background:transparent;border:1px solid #5b6078"></div>
<div class="a" style="left:1563px;top:85px;width:97px;height:29px;border-radius:6px;background:#212436"></div>
<svg class="a" style="left:1573px;top:90px;" width="18" height="19" viewBox="0 0 18 19" fill="none"><path d="M2 7.5 L6 11.5 L15 2.5" stroke="#62a660" stroke-width="2.2" stroke-linecap="round" stroke-linejoin="round"/><path d="M1.5 16.8 L3.8 14.6 L6.1 16.8 L8.4 14.6 L10.7 16.8 L13 14.6 L15.3 16.8" stroke="#62a660" stroke-width="1"/></svg>
<div class="a " style="left:1593px;top:87.5px;font-size:16px;line-height:24px;color:#cad3f5;font-family:'Liberation Sans', sans-serif">1</div>
<svg class="a" style="left:1614px;top:95px;" width="12" height="8" viewBox="0 0 12 8" fill="none"><path d="M0.8 6.8 L6 1.3 L11.2 6.8" stroke="#d4d7e0" stroke-width="1.3"/></svg>
<svg class="a" style="left:1641px;top:95px;" width="12" height="8" viewBox="0 0 12 8" fill="none"><path d="M0.8 1.2 L6 6.7 L11.2 1.2" stroke="#d4d7e0" stroke-width="1.3"/></svg>
<div class="a" style="left:1645px;top:117px;width:18px;height:3px;background:#8bd5ca;"></div>
<div class="a" style="left:513px;top:1358px;width:877px;height:11px;background:#7f8088;"></div>
<div class="a" style="left:1703.5px;top:157px;font-family:'Liberation Sans', sans-serif;font-size:44px;line-height:50px;color:#cad3f5;font-weight:bold;">Getting Started</div>
<div class="a" style="left:1704px;top:253px;font-family:'Liberation Sans', sans-serif;font-size:26px;line-height:32px;color:#cad3f5;font-weight:bold;">Reference Documentation</div>
<div class="a" style="left:1704px;top:301px;font-family:'Liberation Sans', sans-serif;font-size:20px;line-height:32px;color:#cad3f5;">For further reference, please consider the following sections:</div>
<div class="a" style="left:1726px;top:368px;width:6px;height:6px;border-radius:3px;background:#cad3f5"></div>
<div class="a" style="left:1744px;top:353px;font-family:'Liberation Sans', sans-serif;font-size:20px;line-height:32px;color:#c6a0f6;">Official Apache Maven documentation</div>
<div class="a" style="left:1726px;top:400px;width:6px;height:6px;border-radius:3px;background:#cad3f5"></div>
<div class="a" style="left:1744px;top:385px;font-family:'Liberation Sans', sans-serif;font-size:20px;line-height:32px;color:#c6a0f6;">Spring Boot Maven Plugin Reference Guide</div>
<div class="a" style="left:1726px;top:432px;width:6px;height:6px;border-radius:3px;background:#cad3f5"></div>
<div class="a" style="left:1744px;top:417px;font-family:'Liberation Sans', sans-serif;font-size:20px;line-height:32px;color:#c6a0f6;">Create an OCI image</div>
<div class="a" style="left:1726px;top:464px;width:6px;height:6px;border-radius:3px;background:#cad3f5"></div>
<div class="a" style="left:1744px;top:449px;font-family:'Liberation Sans', sans-serif;font-size:20px;line-height:32px;color:#c6a0f6;">Spring Web</div>
<div class="a" style="left:1704px;top:520px;font-family:'Liberation Sans', sans-serif;font-size:26px;line-height:32px;color:#cad3f5;font-weight:bold;">Guides</div>
<div class="a" style="left:1704px;top:568px;font-family:'Liberation Sans', sans-serif;font-size:20px;line-height:32px;color:#cad3f5;">The following guides illustrate how to use some features concretely:</div>
<div class="a" style="left:1726px;top:635px;width:6px;height:6px;border-radius:3px;background:#cad3f5"></div>
<div class="a" style="left:1744px;top:620px;font-family:'Liberation Sans', sans-serif;font-size:20px;line-height:32px;color:#c6a0f6;">Building a RESTful Web Service</div>
<div class="a" style="left:1726px;top:667px;width:6px;height:6px;border-radius:3px;background:#cad3f5"></div>
<div class="a" style="left:1744px;top:652px;font-family:'Liberation Sans', sans-serif;font-size:20px;line-height:32px;color:#c6a0f6;">Serving Web Content with Spring MVC</div>
<div class="a" style="left:1726px;top:699px;width:6px;height:6px;border-radius:3px;background:#cad3f5"></div>
<div class="a" style="left:1744px;top:684px;font-family:'Liberation Sans', sans-serif;font-size:20px;line-height:32px;color:#c6a0f6;">Building REST services with Spring</div>
<div class="a" style="left:1704px;top:756px;font-family:'Liberation Sans', sans-serif;font-size:26px;line-height:32px;color:#cad3f5;font-weight:bold;">Maven Parent overrides</div>
<div class="a" style="left:1704px;top:804px;font-family:'Liberation Sans', sans-serif;font-size:20px;line-height:32px;color:#cad3f5;">Due to Maven&#x27;s design, elements are inherited from the parent POM to the</div>
<div class="a" style="left:1704px;top:836px;font-family:'Liberation Sans', sans-serif;font-size:20px;line-height:32px;color:#cad3f5;">project POM. While most of the inheritance is fine, it also inherits unwanted</div>
<div class="a" style="left:1704px;top:868px;font-family:'Liberation Sans', sans-serif;font-size:20px;line-height:32px;color:#cad3f5;">elements like <span style="display:inline-block;background:#363a4f;border-radius:4px;padding:0 7px;margin:0 3px;height:26px;line-height:26px;vertical-align:-0.5px;font-family:'Liberation Mono', monospace;font-size:17.8px;color:#cad3f5">&lt;license&gt;</span> and <span style="display:inline-block;background:#363a4f;border-radius:4px;padding:0 7px;margin:0 3px;height:26px;line-height:26px;vertical-align:-0.5px;font-family:'Liberation Mono', monospace;font-size:17.8px;color:#cad3f5">&lt;developers&gt;</span> from the parent. To prevent</div>
<div class="a" style="left:1704px;top:900px;font-family:'Liberation Sans', sans-serif;font-size:20px;line-height:32px;color:#cad3f5;">this, the project POM contains empty overrides for these elements. If you</div>
<div class="a" style="left:1704px;top:932px;font-family:'Liberation Sans', sans-serif;font-size:20px;line-height:32px;color:#cad3f5;">manually switch to a different parent and actually want the inheritance, you</div>
<div class="a" style="left:1704px;top:964px;font-family:'Liberation Sans', sans-serif;font-size:20px;line-height:32px;color:#cad3f5;">need to remove those overrides.</div>
<svg class="a" style="left:2449px;top:53px;" width="18" height="20" viewBox="0 0 18 20" fill="none"><path d="M3 14.5 V8.5 Q3 2.2 9 2.2 Q15 2.2 15 8.5 V14.5 L16.8 16.3 H1.2 Z" stroke="#d4d7e0" stroke-width="1.3" stroke-linejoin="round"/><path d="M7 18.5 Q9 20 11 18.5" stroke="#d4d7e0" stroke-width="1.3" stroke-linecap="round"/><path d="M9 0.8 V2.2" stroke="#d4d7e0" stroke-width="1.3"/></svg>
<div class="a" style="left:2422px;top:77px;width:72px;text-align:center;font-family:'Liberation Sans', sans-serif;font-size:15px;line-height:18px;color:#cad3f5">通知</div>
<svg class="a" style="left:2449px;top:117px;" width="18" height="18" viewBox="0 0 18 18" fill="none"><path d="M9 9.5 Q7.5 9.5 7.5 8 Q7.5 5.5 10 5.5 Q13 5.5 13 8.5 Q13 12.5 8.5 12.5 Q3.5 12.5 3.5 8 Q3.5 2 10 2 Q16.5 2 16.5 8.5 Q16.5 16 9 16 Q4 16 1.5 12.5" stroke="#d4d7e0" stroke-width="1.4" stroke-linecap="round"/></svg>
<div class="a" style="left:2422px;top:141px;width:72px;text-align:center;font-family:'Liberation Mono', monospace;font-size:16px;line-height:18px;color:#cad3f5">AI</div>
<svg class="a" style="left:2450px;top:180px;" width="16" height="19" viewBox="0 0 16 19" fill="none"><ellipse cx="8" cy="3.5" rx="7" ry="2.8" stroke="#d4d7e0" stroke-width="1.3"/><path d="M1 3.5 V15 Q1 17.8 8 17.8 Q15 17.8 15 15 V3.5 M1 7.5 Q1 10.3 8 10.3 Q15 10.3 15 7.5 M1 11.3 Q1 14 8 14 Q15 14 15 11.3" stroke="#d4d7e0" stroke-width="1.3"/></svg>
<div class="a" style="left:2422px;top:203px;width:72px;text-align:center;font-family:'Liberation Sans', sans-serif;font-size:15px;line-height:18px;color:#cad3f5">数据库</div>
<div class="a" style="left:2422px;top:239.5px;width:72px;text-align:center;font-family:'Liberation Sans', sans-serif;font-style:italic;font-size:22px;line-height:24px;color:#c4c8d4">m</div>
<div class="a" style="left:2422px;top:267px;width:72px;text-align:center;font-family:'Liberation Mono', monospace;font-size:14.6px;line-height:18px;color:#cad3f5">Maven</div>
<div class="a" style="left:2470px;top:1200px;width:30px;height:32px;border-radius:16px 0 0 16px;background:linear-gradient(90deg,#6ea9ff,#3d86fb)"></div>
<svg class="a" style="left:2480px;top:1210px;" width="8" height="14" viewBox="0 0 8 14" fill="none"><path d="M6 1.5 L1.8 7 L6 12.5" stroke="#fff" stroke-width="2" stroke-linecap="round" stroke-linejoin="round"/></svg>
<svg class="a" style="left:18px;top:1381px;" width="10" height="10" viewBox="0 0 10 10" fill="none"><rect x="0.8" y="0.8" width="8.4" height="8.4" rx="2" fill="#2b3553" stroke="#548af7" stroke-width="1.6"/></svg>
<div class="a " style="left:33px;top:1375px;font-size:16.67px;line-height:24px;color:#cad3f5;font-family:'Liberation Mono', monospace;transform:scaleY(1.16);transform-origin:0 17px">my-restful-web</div>
<svg class="a" style="left:185px;top:1380px;" width="6" height="11" viewBox="0 0 6 11" fill="none"><path d="M0.7 0.7 L5.3 5.5 L0.7 10.3" stroke="#ced3e6" stroke-width="1.4" stroke-linecap="round" stroke-linejoin="round"/></svg>
<svg class="a" style="left:203px;top:1377px;" width="20" height="15" viewBox="0 0 20 15" fill="none"><rect x="0.7" y="0.7" width="18.6" height="13.6" rx="2" stroke="#80bfe0" stroke-width="1.3"/><path d="M4.2 11.3 V4.6 L6.6 8.2 L9 4.6 V11.3" stroke="#80bfe0" stroke-width="1.05" stroke-linejoin="round"/><path d="M13.8 4.2 V11.3 M11.5 9 L13.8 11.5 L16.1 9" stroke="#80bfe0" stroke-width="1.05" stroke-linecap="round" stroke-linejoin="round"/></svg>
<div class="a " style="left:228px;top:1375px;font-size:16.67px;line-height:24px;color:#cad3f5;font-family:'Liberation Mono', monospace;transform:scaleY(1.16);transform-origin:0 17px">HELP.md</div>
<div class="a" style="left:1475px;top:1375px;font-family:'Liberation Mono', monospace;font-size:16.67px;line-height:24px;color:#cad3f5">正在下载 my-restful-web 的插件…</div>
<div class="a" style="left:1774px;top:1383px;width:183px;height:5px;border-radius:3px;background:#363a4f"></div>
<div class="a" style="left:1774px;top:1383px;width:163px;height:5px;border-radius:3px;background:#c6a0f6"></div>
<div class="a" style="left:1964px;top:1376px;width:20px;height:20px;border-radius:10px;background:#363a4f"></div>
<svg class="a" style="left:1969px;top:1381px;" width="10" height="10" viewBox="0 0 10 10" fill="none"><path d="M1 1 L9 9 M9 1 L1 9" stroke="#8087a2" stroke-width="1.3"/></svg>
<div class="a" style="left:1998px;top:1375px;font-family:'Liberation Mono', monospace;font-size:16.67px;line-height:24px;color:#c6a0f6"><span style="font-size:17.4px">全部显示</span><span style="letter-spacing:1.2px">(2)</span></div>
<div class="a " style="left:2123px;top:1375px;font-size:16.67px;line-height:24px;color:#cad3f5;font-family:'Liberation Mono', monospace;transform:scaleY(1.16);transform-origin:0 17px">1:1</div>
<svg class="a" style="left:2180px;top:1377px;" width="18" height="17" viewBox="0 0 18 17" fill="none"><path d="M1 8.5 Q9 1 17 8.5 Q9 16 1 8.5 Z" stroke="#d4d7e0" stroke-width="1.3"/><circle cx="9" cy="8.5" r="2.5" stroke="#d4d7e0" stroke-width="1.3"/><path d="M2.5 15.5 L15.5 1.5" stroke="#d4d7e0" stroke-width="1.3"/></svg>
<div class="a " style="left:2225px;top:1375px;font-size:16.67px;line-height:24px;color:#cad3f5;font-family:'Liberation Mono', monospace;transform:scaleY(1.16);transform-origin:0 17px">LF</div>
<div class="a " style="left:2271px;top:1375px;font-size:16.67px;line-height:24px;color:#cad3f5;font-family:'Liberation Mono', monospace;transform:scaleY(1.16);transform-origin:0 17px">UTF-8</div>
<div class="a" style="left:2351px;top:1375px;font-family:'Liberation Mono', monospace;font-size:16.67px;line-height:24px;color:#cad3f5">4 个空格</div>
<svg class="a" style="left:2451px;top:1376px;" width="19" height="18" viewBox="0 0 19 18" fill="none"><rect x="0.8" y="7.5" width="12" height="9.7" rx="1.5" stroke="#d4d7e0" stroke-width="1.3"/><path d="M9.5 7.5 V4.5 Q9.5 0.9 13.5 0.9 Q17.5 0.9 17.5 4.5 V6" stroke="#d4d7e0" stroke-width="1.3"/><circle cx="6.8" cy="12.3" r="1" fill="#d4d7e0"/></svg>
</body></html>
